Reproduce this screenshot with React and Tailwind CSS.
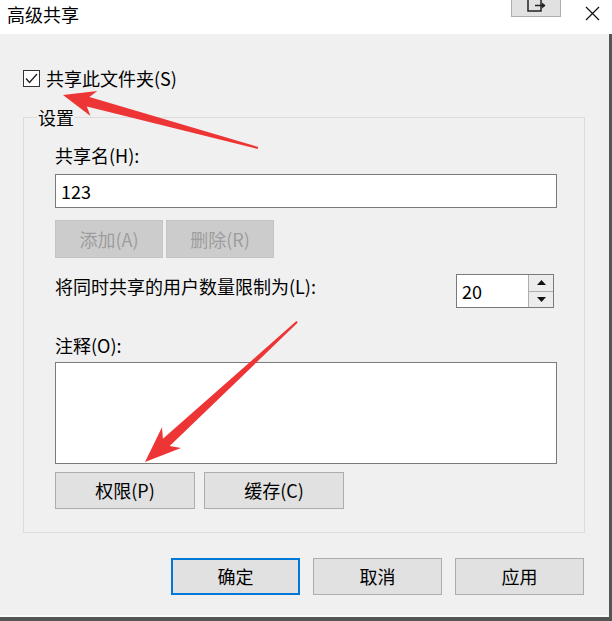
import React from 'react';

const WinButton = ({ children, className = '', primary = false }) => (
  <button
    className={`flex items-center justify-center bg-[#e1e1e1] text-black ${
      primary ? 'border-2 border-[#0078d7]' : 'border border-[#adadad]'
    } ${className}`}
  >
    {children}
  </button>
);

const App = () => {
  return (
    <div className="relative w-[612px] h-[621px] overflow-hidden bg-white text-[18px] text-black font-['Noto_Sans_CJK_SC','Noto_Sans',sans-serif]">
      {/* Title bar */}
      <div className="flex items-start h-[34px] bg-white">
        <div className="pl-[7px] pt-[1px] leading-[26px]">高级共享</div>
        <div className="flex-1" />
        <div className="flex items-start justify-center w-[50px] h-[17px] bg-[#e1e1e1] border border-t-0 border-[#adadad]">
          <svg width="20" height="12" viewBox="0 0 20 12" className="ml-[2px]">
            <path d="M1 0 V11 H14 V0" fill="none" stroke="#222" strokeWidth="1.5" />
            <path d="M8 5.5 H18" stroke="#222" strokeWidth="1.5" />
            <path d="M15 2.5 L18.5 5.5 L15 8.5 Z" fill="#222" />
          </svg>
        </div>
        <div className="ml-[24px] mr-[12px] mt-[6px]">
          <svg width="15" height="15" viewBox="0 0 15 15">
            <path d="M1 1 L14 14 M14 1 L1 14" stroke="#111" strokeWidth="1.2" />
          </svg>
        </div>
      </div>

      <div className="flex h-[583px]">
        {/* Dialog body */}
        <div className="flex flex-col w-[609px] bg-[#f0f0f0] border-b-2 border-[#fafafa] pl-[23px] pr-[24px]">
          {/* Share checkbox */}
          <div className="flex items-center gap-[6px] mt-[35px] h-[18px]">
            <div className="flex items-center justify-center w-[17px] h-[17px] bg-white border border-[#333]">
              <svg width="13" height="11" viewBox="0 0 13 11">
                <path d="M1 5.5 L4.5 9.5 L12 1" fill="none" stroke="#222" strokeWidth="1.4" />
              </svg>
            </div>
            <span className="leading-[18px]">共享此文件夹(S)</span>
          </div>

          {/* Settings group */}
          <fieldset className="mt-[18px] px-[13px] pb-[23px] border border-[#dcdcdc]">
            <legend className="px-[1px] leading-[24px]">设置</legend>
            <div className="flex flex-col pl-[18px] pr-[14px]">
              <div className="mt-[14px] leading-[24px]">共享名(H):</div>
              <div className="flex items-center mt-[7px] h-[34px] px-[5px] bg-white border border-[#7a7a7a]">
                123
              </div>
              <div className="flex gap-[3px] mt-[12px]">
                <button className="w-[108px] h-[38px] bg-[#cccccc] border border-[#c4c4c4] text-[#9d9d9d]">
                  添加(A)
                </button>
                <button className="w-[108px] h-[38px] bg-[#cccccc] border border-[#c4c4c4] text-[#9d9d9d]">
                  删除(R)
                </button>
              </div>

              <div className="flex items-start justify-between mt-[16px]">
                <span className="leading-[24px]">将同时共享的用户数量限制为(L):</span>
                <div className="flex h-[34px] mr-[3px] bg-white border border-[#7a7a7a]">
                  <div className="flex items-center w-[71px] pl-[5px]">20</div>
                  <div className="flex flex-col w-[25px] border-l border-[#adadad]">
                    <div className="flex flex-1 items-center justify-center bg-[#ececec] border-b border-[#adadad]">
                      <svg width="9" height="5" viewBox="0 0 9 5">
                        <path d="M0 5 L4.5 0 L9 5 Z" fill="#111" />
                      </svg>
                    </div>
                    <div className="flex flex-1 items-center justify-center bg-[#ececec]">
                      <svg width="9" height="5" viewBox="0 0 9 5">
                        <path d="M0 0 L4.5 5 L9 0 Z" fill="#111" />
                      </svg>
                    </div>
                  </div>
                </div>
              </div>

              <div className="mt-[25px] leading-[24px]">注释(O):</div>
              <div className="mt-[5px] h-[102px] bg-white border border-[#7a7a7a]" />
              <div className="flex gap-[9px] mt-[8px]">
                <WinButton className="w-[140px] h-[37px]">权限(P)</WinButton>
                <WinButton className="w-[140px] h-[37px]">缓存(C)</WinButton>
              </div>
            </div>
          </fieldset>

          {/* Dialog buttons */}
          <div className="flex justify-end gap-[13px] mt-[25px] mr-[1px]">
            <WinButton primary className="w-[129px] h-[37px]">确定</WinButton>
            <WinButton className="w-[129px] h-[37px]">取消</WinButton>
            <WinButton className="w-[129px] h-[37px]">应用</WinButton>
          </div>
        </div>
        <div className="w-[3px] bg-[#555]" />
      </div>
      <div className="h-[4px] bg-[#555]" />

      {/* Red annotation arrows */}
      <svg
        className="absolute inset-0 pointer-events-none"
        width="612"
        height="621"
        viewBox="0 0 612 621"
      >
        <polygon
          points="63,95 90.5,115.9 86.8,106.6 257.6,148.9 258.2,147 89.4,97 97.3,90.9"
          fill="#ee3535"
        />
        <polygon
          points="145,462 181,447.9 169.7,446.1 297.8,322.6 296.4,321.1 162.9,438.7 162,427.3"
          fill="#ee3535"
        />
      </svg>
    </div>
  );
};

export default App;
